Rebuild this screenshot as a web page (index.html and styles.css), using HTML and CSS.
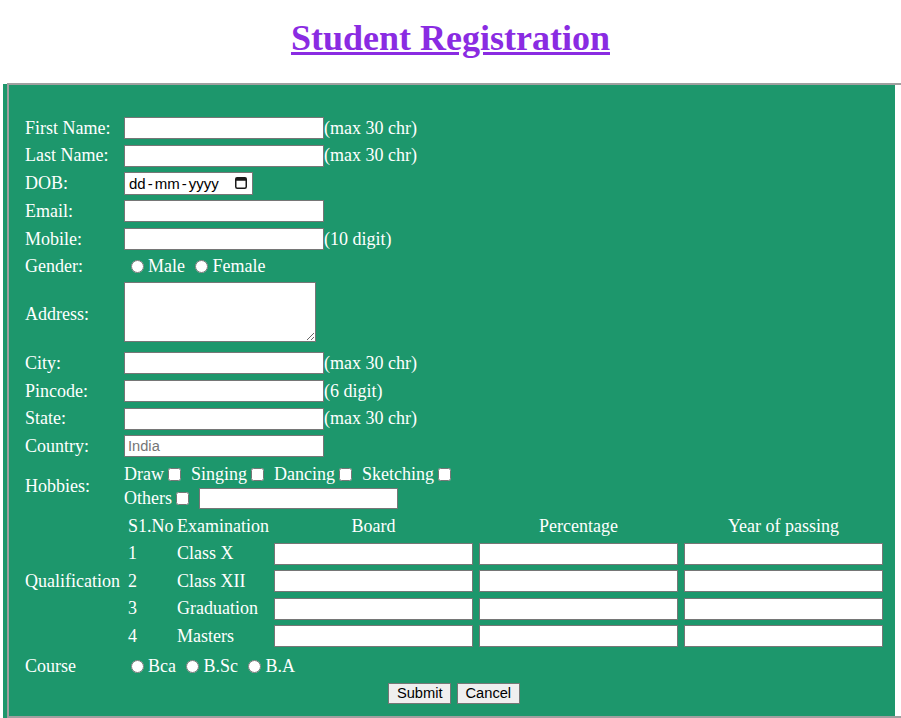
FILE: index.html
```html
<!DOCTYPE html>
<html lang="en">
<head>
<meta charset="utf-8">
<title>Student Registration</title>
<link rel="stylesheet" href="styles.css">
</head>
<body>
<h1 class="title">Student Registration</h1>
<div class="frame">
  <div class="strip"></div>
  <div class="box">
    <form class="panel">
      <div class="row h28"><label class="lbl">First Name:</label><div class="field"><input class="txt" type="text"><span>(max 30 chr)</span></div></div>
      <div class="row h27"><label class="lbl">Last Name:</label><div class="field"><input class="txt" type="text"><span>(max 30 chr)</span></div></div>
      <div class="row h28"><label class="lbl">DOB:</label><div class="field"><div class="date"><span class="dtext">dd<span class="sep">-</span>mm<span class="sep">-</span>yyyy</span><svg class="cal" width="12" height="12" viewBox="0 0 12 12"><rect x="0.75" y="0.75" width="10.5" height="10.5" rx="1.5" fill="none" stroke="#1a1a1a" stroke-width="1.5"/><rect x="0.75" y="0.75" width="10.5" height="3" fill="#1a1a1a"/></svg></div></div></div>
      <div class="row h28"><label class="lbl">Email:</label><div class="field"><input class="txt" type="text"></div></div>
      <div class="row h28"><label class="lbl">Mobile:</label><div class="field"><input class="txt" type="text"><span>(10 digit)</span></div></div>
      <div class="row h26"><label class="lbl">Gender:</label><div class="field"><label class="opt"><input class="rad" type="radio" name="g">Male</label><label class="opt"><input class="rad" type="radio" name="g">Female</label></div></div>
      <div class="row h70"><label class="lbl">Address:</label><div class="field top"><textarea class="area"></textarea></div></div>
      <div class="row h28"><label class="lbl">City:</label><div class="field"><input class="txt" type="text"><span>(max 30 chr)</span></div></div>
      <div class="row h28"><label class="lbl">Pincode:</label><div class="field"><input class="txt" type="text"><span>(6 digit)</span></div></div>
      <div class="row h27"><label class="lbl">State:</label><div class="field"><input class="txt" type="text"><span>(max 30 chr)</span></div></div>
      <div class="row h28"><label class="lbl">Country:</label><div class="field"><input class="txt" type="text" placeholder="India"></div></div>
      <div class="row h52"><label class="lbl">Hobbies:</label>
        <div class="hobbies">
          <div class="hline"><span>Draw</span><input class="chk" type="checkbox"><span>Singing</span><input class="chk" type="checkbox"><span>Dancing</span><input class="chk" type="checkbox"><span>Sketching</span><input class="chk" type="checkbox"></div>
          <div class="hline"><span>Others</span><input class="chk" type="checkbox"><input class="txt other" type="text"></div>
        </div>
      </div>
      <div class="row h138"><label class="lbl">Qualification</label>
        <div class="qual">
          <span>S1.No</span><span>Examination</span><span class="c">Board</span><span class="c">Percentage</span><span class="c">Year of passing</span>
          <span>1</span><span>Class X</span><input class="txt q" type="text"><input class="txt q" type="text"><input class="txt q" type="text">
          <span>2</span><span>Class XII</span><input class="txt q" type="text"><input class="txt q" type="text"><input class="txt q" type="text">
          <span>3</span><span>Graduation</span><input class="txt q" type="text"><input class="txt q" type="text"><input class="txt q" type="text">
          <span>4</span><span>Masters</span><input class="txt q" type="text"><input class="txt q" type="text"><input class="txt q" type="text">
        </div>
      </div>
      <div class="row h32"><label class="lbl">Course</label><div class="field"><label class="opt"><input class="rad" type="radio" name="c">Bca</label><label class="opt"><input class="rad" type="radio" name="c">B.Sc</label><label class="opt"><input class="rad" type="radio" name="c">B.A</label></div></div>
      <div class="actions"><button class="btn" type="submit">Submit</button><button class="btn" type="button">Cancel</button></div>
    </form>
  </div>
</div>
</body>
</html>
```
FILE: styles.css
```css
html, body {
  margin: 0;
  padding: 0;
}
body {
  background: #fff;
  font-family: "Liberation Serif", "Times New Roman", serif;
}
.title {
  margin: 20px 0 0;
  height: 38px;
  line-height: 37px;
  text-align: center;
  font-size: 36px;
  font-weight: bold;
  color: #8a2be2;
  text-decoration: underline;
}
.frame {
  display: flex;
  margin: 25px 0 0 3px;
}
.strip {
  width: 4px;
  margin-top: 1px;
  background: #1d976c;
}
.box {
  flex: 1;
  border-style: solid;
  border-color: #a0a0a0;
  border-width: 2px 0 2px 2px;
}
.panel {
  box-sizing: border-box;
  width: 886px;
  height: 631px;
  padding: 29px 12px 12px 16px;
  background: #1d976c;
  color: #fff;
  font-size: 18px;
}
.row {
  display: grid;
  grid-template-columns: 99px auto;
  align-items: center;
}
.h26 { height: 26px; }
.h27 { height: 27px; }
.h28 { height: 28px; }
.h32 { height: 32px; }
.h52 { height: 52px; }
.h70 { height: 70px; }
.h138 { height: 138px; }
.field {
  display: flex;
  align-items: center;
}
.field.top {
  align-self: start;
  padding-top: 3px;
}
.txt {
  box-sizing: border-box;
  width: 200px;
  height: 22px;
  margin: 0;
  padding: 1px 3px;
  border: 1px solid #767676;
  background: #fff;
  font: 14.67px "Liberation Sans", Arial, sans-serif;
  color: #000;
}
.txt::placeholder {
  color: #757575;
}
.date {
  box-sizing: border-box;
  width: 129px;
  height: 23px;
  padding: 0 5px 0 4px;
  border: 1px solid #767676;
  background: #fff;
  display: flex;
  align-items: center;
  justify-content: space-between;
  font: 15px "Liberation Sans", Arial, sans-serif;
  color: #000;
}
.sep {
  margin: 0 2px;
}
.cal {
  display: block;
}
.opt {
  display: flex;
  align-items: center;
}
.opt + .opt {
  margin-left: 3.5px;
}
.rad {
  width: 13px;
  height: 13px;
  margin: 0 4.5px 0 6.5px;
}
.area {
  box-sizing: border-box;
  display: block;
  width: 192px;
  height: 60px;
  margin: 0;
  border: 1px solid #767676;
  background: #fff;
}
.hobbies {
  display: flex;
  flex-direction: column;
}
.hline {
  display: flex;
  align-items: center;
  height: 24px;
}
.chk {
  width: 13px;
  height: 13px;
  margin: 0 10px 0 4px;
}
.other {
  width: 199px;
  height: 21px;
}
.qual {
  display: grid;
  grid-template-columns: 43px 91px 199px 199px 199px;
  grid-template-rows: 28px repeat(4, 27.5px);
  column-gap: 6px;
  align-items: center;
  padding-left: 4px;
}
.qual .c {
  text-align: center;
}
.q {
  width: 199px;
}
.actions {
  display: flex;
  justify-content: center;
  align-items: center;
  gap: 6px;
  height: 22px;
}
.btn {
  box-sizing: border-box;
  height: 21px;
  margin: 0;
  padding: 0 7.5px;
  border: 1px solid #767676;
  border-radius: 0;
  background: #efefef;
  color: #000;
  font: 14.67px "Liberation Sans", Arial, sans-serif;
}
```
